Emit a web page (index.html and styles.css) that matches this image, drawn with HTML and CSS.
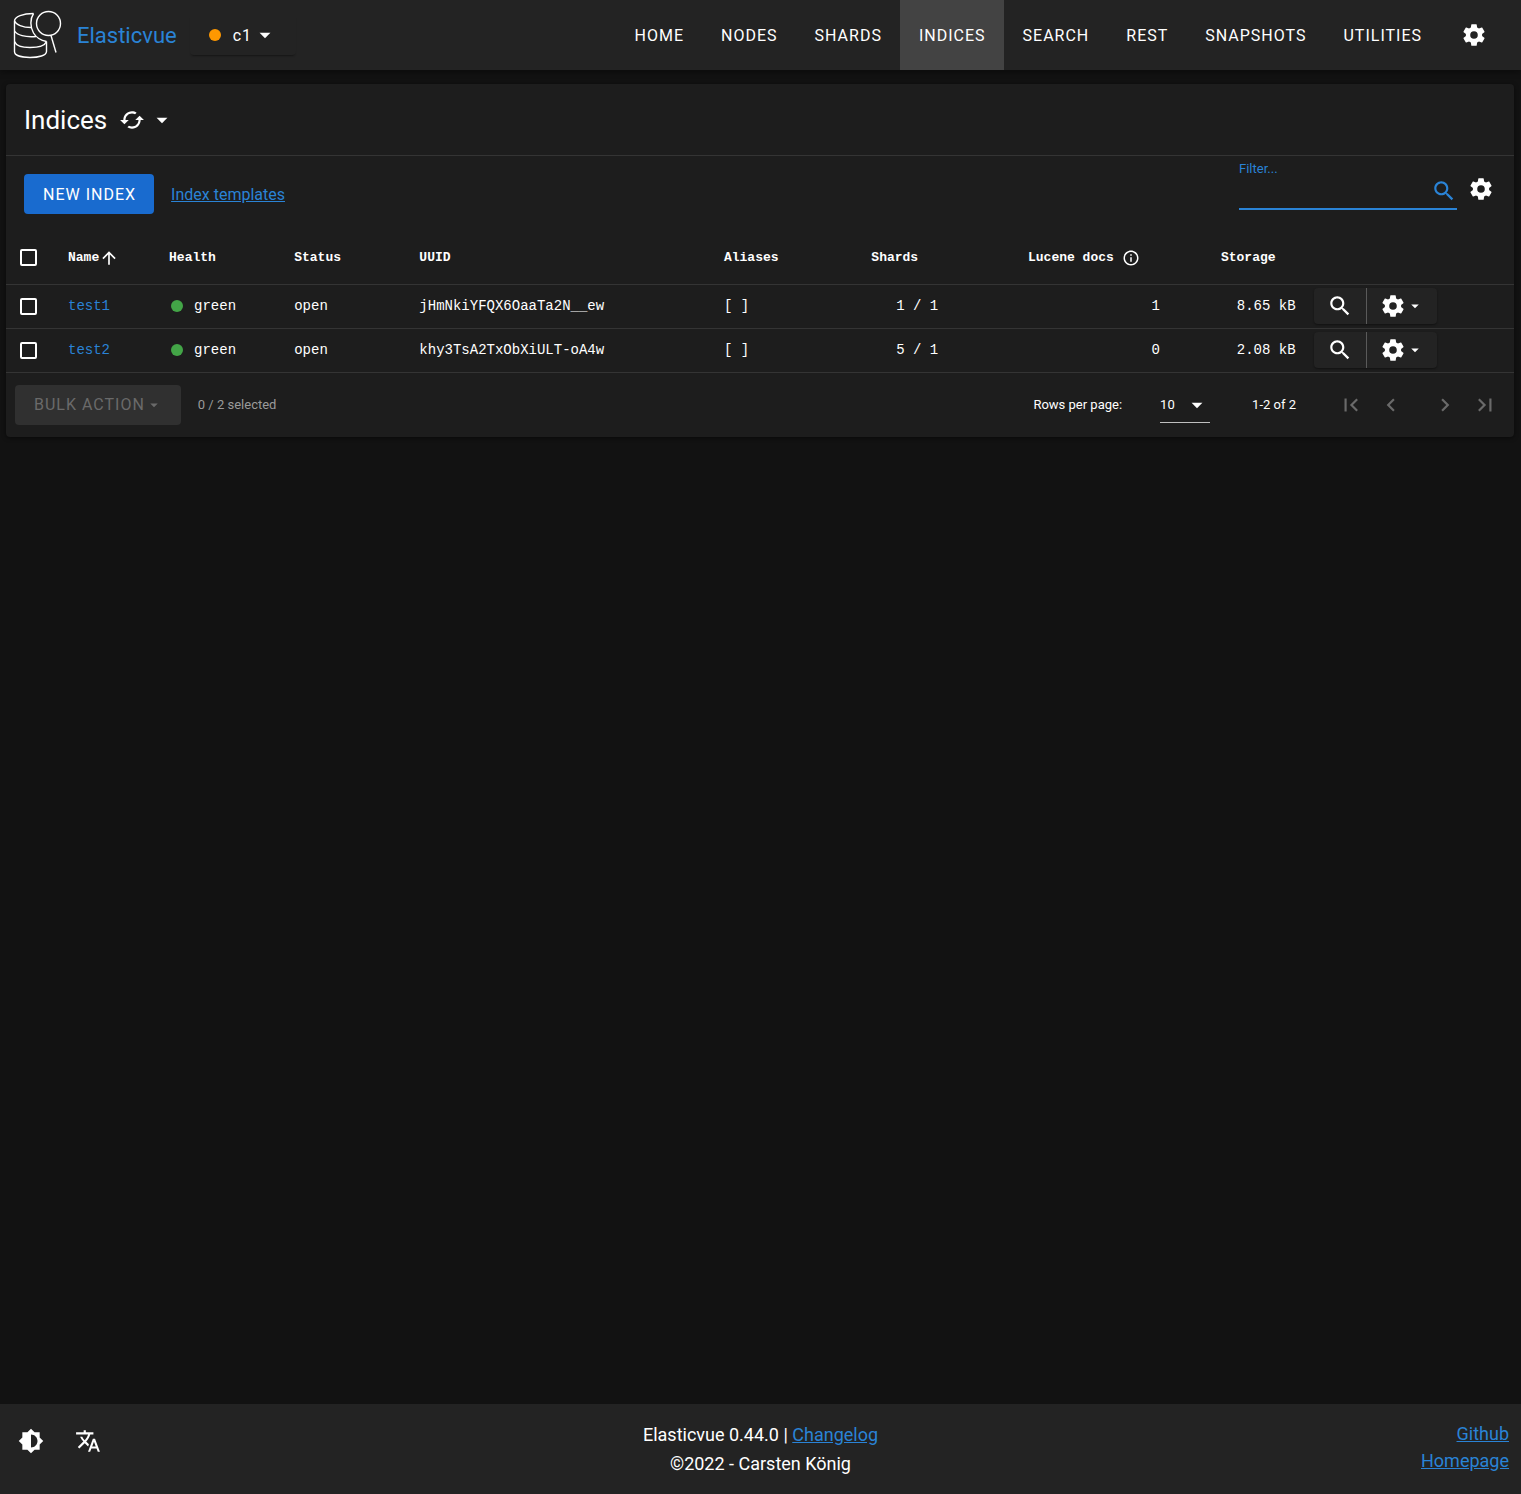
FILE: index.html
```html
<!DOCTYPE html>
<html lang="en">
<head>
  <meta charset="UTF-8" />
  <meta name="viewport" content="width=device-width, initial-scale=1.0" />
  <title>Elasticvue</title>
  <link rel="stylesheet" href="styles.css">
</head>
<body>
  <!-- Icon sprite -->
  <svg class="sprite" xmlns="http://www.w3.org/2000/svg">
    <symbol id="cog" viewBox="0 0 24 24"><path d="M12,15.5A3.5,3.5 0 0,1 8.5,12A3.5,3.5 0 0,1 12,8.5A3.5,3.5 0 0,1 15.5,12A3.5,3.5 0 0,1 12,15.5M19.43,12.97C19.47,12.65 19.5,12.33 19.5,12C19.5,11.67 19.47,11.34 19.43,11L21.54,9.37C21.73,9.22 21.78,8.95 21.66,8.73L19.66,5.27C19.54,5.05 19.27,4.96 19.05,5.05L16.56,6.05C16.04,5.66 15.5,5.32 14.87,5.07L14.5,2.42C14.46,2.18 14.25,2 14,2H10C9.75,2 9.54,2.18 9.5,2.42L9.13,5.07C8.5,5.32 7.96,5.66 7.44,6.05L4.95,5.05C4.73,4.96 4.46,5.05 4.34,5.27L2.34,8.73C2.21,8.95 2.27,9.22 2.46,9.37L4.57,11C4.53,11.34 4.5,11.67 4.5,12C4.5,12.33 4.53,12.65 4.57,12.97L2.46,14.63C2.27,14.78 2.21,15.05 2.34,15.27L4.34,18.73C4.46,18.95 4.73,19.03 4.95,18.95L7.44,17.94C7.96,18.34 8.5,18.68 9.13,18.93L9.5,21.58C9.54,21.82 9.75,22 10,22H14C14.25,22 14.46,21.82 14.5,21.58L14.87,18.93C15.5,18.67 16.04,18.34 16.56,17.94L19.05,18.95C19.27,19.03 19.54,18.95 19.66,18.73L21.66,15.27C21.78,15.05 21.73,14.78 21.54,14.63L19.43,12.97Z" /></symbol>
    <symbol id="search" viewBox="0 0 24 24"><path d="M15.5 14h-.79l-.28-.27C15.41 12.59 16 11.11 16 9.5 16 5.91 13.09 3 9.5 3S3 5.91 3 9.5 5.91 16 9.5 16c1.61 0 3.09-.59 4.23-1.57l.27.28v.79l5 4.99L20.49 19l-4.99-5zm-6 0C7.01 14 5 11.99 5 9.5S7.01 5 9.5 5 14 7.01 14 9.5 11.99 14 9.5 14z" /></symbol>
    <symbol id="caret" viewBox="0 0 24 24"><path d="M7 10l5 5 5-5z" /></symbol>
    <symbol id="reload" viewBox="0 0 24 24"><path d="M19 8l-4 4h3c0 3.31-2.69 6-6 6-1.01 0-1.97-.25-2.8-.7l-1.46 1.46C8.97 19.54 10.43 20 12 20c4.42 0 8-3.58 8-8h3l-4-4zM6 12c0-3.31 2.69-6 6-6 1.01 0 1.97.25 2.8.7l1.46-1.46C15.03 4.46 13.57 4 12 4c-4.42 0-8 3.58-8 8H1l4 4 4-4H6z" /></symbol>
    <symbol id="arrow-up" viewBox="0 0 24 24"><path d="M4 12l1.41 1.41L11 7.83V20h2V7.83l5.58 5.59L20 12l-8-8-8 8z" /></symbol>
    <symbol id="info" viewBox="0 0 24 24"><path d="M11 7h2v2h-2zm0 4h2v6h-2zm1-9C6.48 2 2 6.48 2 12s4.48 10 10 10 10-4.48 10-10S17.52 2 12 2zm0 18c-4.41 0-8-3.59-8-8s3.59-8 8-8 8 3.59 8 8-3.59 8-8 8z" /></symbol>
    <symbol id="first" viewBox="0 0 24 24"><path d="M18.41 16.59L13.82 12l4.59-4.59L17 6l-6 6 6 6zM6 6h2v12H6z" /></symbol>
    <symbol id="prev" viewBox="0 0 24 24"><path d="M15.41 7.41L14 6l-6 6 6 6 1.41-1.41L10.83 12z" /></symbol>
    <symbol id="next" viewBox="0 0 24 24"><path d="M10 6L8.59 7.41 13.17 12l-4.58 4.59L10 18l6-6z" /></symbol>
    <symbol id="last" viewBox="0 0 24 24"><path d="M5.59 7.41L10.18 12l-4.59 4.59L7 18l6-6-6-6zM16 6h2v12h-2z" /></symbol>
    <symbol id="theme" viewBox="0 0 24 24"><path d="M20 15.31L23.31 12 20 8.69V4h-4.69L12 .69 8.69 4H4v4.69L.69 12 4 15.31V20h4.69L12 23.31 15.31 20H20v-4.69zM12 18V6c3.31 0 6 2.69 6 6s-2.69 6-6 6z" /></symbol>
    <symbol id="translate" viewBox="0 0 24 24"><path d="M12.87 15.07l-2.54-2.51.03-.03c1.74-1.94 2.98-4.17 3.71-6.53H17V4h-7V2H8v2H1v1.99h11.17C11.5 7.92 10.44 9.75 9 11.35 8.07 10.32 7.3 9.19 6.69 8h-2c.73 1.63 1.73 3.17 2.98 4.56l-5.09 5.02L4 19l5-5 3.11 3.11.76-2.04zM18.5 10h-2L12 22h2l1.12-3h4.75L21 22h2l-4.5-12zm-2.62 7l1.62-4.33L19.12 17h-3.24z" /></symbol>
  </svg>

  <header class="topbar">
    <a class="brand" href="#">
      <svg class="logo" viewBox="0 0 50 50">
        <path d="M21.500 3.500C11 3.500 2.500 6.500 2.500 11V41.500C2.500 45.500 9.500 47.500 18 47.500S34.500 45.500 34.500 41.500V31.500" />
        <path d="M21.500 3.500C18 9 18 17 21.500 23C24.500 28 29 30.500 34.500 31.500" />
        <path d="M2.500 11C4 14.500 10.500 17.500 19 17.500" />
        <path d="M2.500 21C5 25 13 27.500 24 26.500" />
        <path d="M2.500 31.500C4 35.500 9.500 37.500 18 37.500S33 35.500 34.500 31.500" />
        <circle cx="36.500" cy="13.500" r="12" />
        <path d="M39 25.500L44 42.500" />
      </svg>
      <span>Elasticvue</span>
    </a>
    <button class="btn cluster" type="button">
      <span class="dot orange"></span>
      c1
      <svg class="icon"><use href="#caret" /></svg>
    </button>
    <nav class="tabs">
      <a href="#">HOME</a>
      <a href="#">NODES</a>
      <a href="#">SHARDS</a>
      <a href="#" class="active">INDICES</a>
      <a href="#">SEARCH</a>
      <a href="#">REST</a>
      <a href="#">SNAPSHOTS</a>
      <a href="#">UTILITIES</a>
    </nav>
    <button class="icon-btn" type="button" aria-label="Settings"><svg class="icon"><use href="#cog" /></svg></button>
  </header>

  <main class="card">
    <div class="card-title">
      <h1>Indices</h1>
      <button class="icon-btn reload" type="button" aria-label="Reload">
        <svg class="icon"><use href="#reload" /></svg>
        <svg class="icon"><use href="#caret" /></svg>
      </button>
    </div>

    <div class="toolbar">
      <button class="btn primary" type="button">NEW INDEX</button>
      <a class="link" href="#">Index templates</a>
      <div class="filter">
        <label for="filter">Filter...</label>
        <div class="filter-row">
          <input id="filter" type="text" />
          <svg class="icon"><use href="#search" /></svg>
        </div>
      </div>
      <button class="icon-btn" type="button" aria-label="Table settings"><svg class="icon"><use href="#cog" /></svg></button>
    </div>

    <table class="indices">
      <thead>
        <tr>
          <th class="col-check"><input type="checkbox" aria-label="Select all" /></th>
          <th class="col-name"><span class="head">Name<svg class="icon sort"><use href="#arrow-up" /></svg></span></th>
          <th class="col-health">Health</th>
          <th class="col-status">Status</th>
          <th class="col-uuid">UUID</th>
          <th class="col-aliases">Aliases</th>
          <th class="col-shards num">Shards</th>
          <th class="col-docs num"><span class="head">Lucene docs<svg class="icon info"><use href="#info" /></svg></span></th>
          <th class="col-storage num">Storage</th>
          <th></th>
        </tr>
      </thead>
      <tbody>
        <tr>
          <td><input type="checkbox" aria-label="Select test1" /></td>
          <td><a href="#">test1</a></td>
          <td><span class="health"><span class="dot green"></span>green</span></td>
          <td>open</td>
          <td>jHmNkiYFQX6OaaTa2N__ew</td>
          <td>[ ]</td>
          <td class="num">1 / 1</td>
          <td class="num">1</td>
          <td class="num">8.65 kB</td>
          <td>
            <div class="actions">
              <button type="button" aria-label="Search test1"><svg class="icon"><use href="#search" /></svg></button>
              <button type="button" aria-label="Options for test1"><svg class="icon"><use href="#cog" /></svg><svg class="icon small"><use href="#caret" /></svg></button>
            </div>
          </td>
        </tr>
        <tr>
          <td><input type="checkbox" aria-label="Select test2" /></td>
          <td><a href="#">test2</a></td>
          <td><span class="health"><span class="dot green"></span>green</span></td>
          <td>open</td>
          <td>khy3TsA2TxObXiULT-oA4w</td>
          <td>[ ]</td>
          <td class="num">5 / 1</td>
          <td class="num">0</td>
          <td class="num">2.08 kB</td>
          <td>
            <div class="actions">
              <button type="button" aria-label="Search test2"><svg class="icon"><use href="#search" /></svg></button>
              <button type="button" aria-label="Options for test2"><svg class="icon"><use href="#cog" /></svg><svg class="icon small"><use href="#caret" /></svg></button>
            </div>
          </td>
        </tr>
      </tbody>
    </table>

    <div class="table-footer">
      <button class="btn bulk" type="button" disabled>BULK ACTION<svg class="icon small"><use href="#caret" /></svg></button>
      <span class="selected">0 / 2 selected</span>
      <label class="rows-label" for="rows">Rows per page:</label>
      <div class="rows-select">
        <select id="rows">
          <option>10</option>
          <option>20</option>
          <option>100</option>
        </select>
        <svg class="icon"><use href="#caret" /></svg>
      </div>
      <span class="range">1-2 of 2</span>
      <div class="pager">
        <button type="button" disabled aria-label="First page"><svg class="icon"><use href="#first" /></svg></button>
        <button type="button" disabled aria-label="Previous page"><svg class="icon"><use href="#prev" /></svg></button>
      </div>
      <div class="pager">
        <button type="button" disabled aria-label="Next page"><svg class="icon"><use href="#next" /></svg></button>
        <button type="button" disabled aria-label="Last page"><svg class="icon"><use href="#last" /></svg></button>
      </div>
    </div>
  </main>

  <footer class="footer">
    <div class="footer-tools">
      <button class="icon-btn" type="button" aria-label="Toggle theme"><svg class="icon"><use href="#theme" /></svg></button>
      <button class="icon-btn" type="button" aria-label="Language"><svg class="icon"><use href="#translate" /></svg></button>
    </div>
    <div class="footer-info">
      <p>Elasticvue 0.44.0 | <a href="#">Changelog</a></p>
      <p>©2022 - Carsten König</p>
    </div>
    <div class="footer-links">
      <a href="#">Github</a>
      <a href="#">Homepage</a>
    </div>
  </footer>
</body>
</html>
```
FILE: styles.css
```css
/* Reset & Base */
* {
  margin: 0;
  padding: 0;
  box-sizing: border-box;
}

body {
  display: flex;
  flex-direction: column;
  min-height: 100vh;
  background: #121212;
  color: #fff;
  font-family: Roboto, sans-serif;
  font-size: 16px;
}

button, input, select {
  font: inherit;
  color: inherit;
  background: none;
  border: none;
}

button {
  cursor: pointer;
}

a {
  color: #2a83d6;
}

.sprite {
  display: none;
}

.icon {
  display: block;
  flex: none;
  width: 26px;
  height: 26px;
  fill: currentColor;
}

.icon.small {
  width: 18px;
  height: 18px;
}

.dot {
  width: 12px;
  height: 12px;
  border-radius: 50%;
}

.orange {
  background: #ff9800;
}

.green {
  background: #43a547;
}

/* Buttons */
.btn {
  display: flex;
  align-items: center;
  height: 40px;
  padding: 0 18px 0 19px;
  border-radius: 4px;
  font-size: 16px;
  letter-spacing: 1px;
}

.icon-btn {
  display: flex;
  align-items: center;
}

.primary {
  background: #196bcf;
}

/* Top bar */
.topbar {
  display: flex;
  align-items: center;
  height: 70px;
  padding: 0 34px 0 12px;
  background: #232323;
  box-shadow: 0 2px 6px rgba(0, 0, 0, 0.4);
}

.brand {
  display: flex;
  align-items: center;
  gap: 15px;
  font-size: 22px;
  text-decoration: none;
}

.logo {
  width: 50px;
  height: 50px;
  fill: none;
  stroke: #fff;
  stroke-width: 1.4;
}

.cluster {
  gap: 12px;
  margin-left: 13px;
  box-shadow: 0 2px 2px -1px rgba(0, 0, 0, 0.4);
}

.cluster .icon {
  margin-left: -12px;
}

.tabs {
  display: flex;
  align-self: stretch;
  margin-left: auto;
}

.tabs a {
  display: flex;
  align-items: center;
  padding: 0 18px 0 19px;
  color: #fff;
  font-size: 16px;
  letter-spacing: 1px;
  text-decoration: none;
}

.tabs .active {
  background: #434343;
}

.topbar .icon-btn {
  margin-left: 21px;
}

/* Card */
.card {
  margin: 14px 7px 14px 6px;
  background: #1d1d1d;
  border-radius: 4px;
  box-shadow: 0 1px 4px rgba(0, 0, 0, 0.5);
}

.card-title {
  display: flex;
  align-items: center;
  gap: 12px;
  height: 72px;
  padding: 0 18px;
  border-bottom: 1px solid #343434;
}

h1 {
  font-size: 26px;
  font-weight: 400;
}

.reload {
  gap: 4px;
}

/* Toolbar */
.toolbar {
  display: flex;
  align-items: center;
  height: 76px;
  padding: 0 20px 0 18px;
}

.link {
  margin-left: 17px;
}

.filter {
  align-self: flex-start;
  width: 218px;
  margin-left: auto;
  margin-right: 11px;
  padding-top: 4px;
  border-bottom: 2px solid #2a83d6;
  color: #2a83d6;
}

.filter label {
  display: block;
  font-size: 13px;
  line-height: 18px;
}

.filter-row {
  display: flex;
  height: 30px;
}

.filter input {
  flex: 1;
  min-width: 0;
  outline: none;
}

.toolbar .icon-btn {
  margin-bottom: 10px;
}

/* Table */
.indices {
  width: 100%;
  table-layout: fixed;
  border-collapse: collapse;
  font-family: "Liberation Mono", monospace;
  font-size: 14px;
}

.indices th,
.indices td {
  height: 44px;
  padding: 0 9px;
  border-bottom: 1px solid #343434;
  text-align: left;
  vertical-align: middle;
}

.indices th {
  height: 52px;
  font-size: 13px;
}

.indices .num {
  text-align: right;
}

.indices th.num {
  padding-right: 29px;
}

.indices td a {
  text-decoration: none;
}

.indices th:first-child,
.indices td:first-child {
  padding-left: 14px;
}

.col-check { width: 53px; }
.col-name { width: 6.7%; }
.col-health { width: 8.3%; }
.col-status { width: 8.3%; }
.col-uuid { width: 20.2%; }
.col-aliases { width: 8.1%; }
.col-shards { width: 7.3%; }
.col-docs { width: 14.7%; }
.col-storage { width: 9%; }

.indices input {
  display: block;
  appearance: none;
  width: 17px;
  height: 17px;
  border: 2px solid #fff;
  border-radius: 2px;
}

.head {
  display: inline-flex;
  align-items: center;
}

.icon.sort {
  width: 20px;
  height: 20px;
}

.icon.info {
  width: 18px;
  height: 18px;
  margin-left: 8px;
}

.health {
  display: flex;
  align-items: center;
  gap: 11px;
  padding-left: 2px;
}

.actions {
  display: inline-flex;
  height: 36px;
  background: #232323;
  border-radius: 4px;
  box-shadow: 0 1px 2px rgba(0, 0, 0, 0.4);
  vertical-align: middle;
}

.actions button {
  display: flex;
  align-items: center;
  padding: 0 13px;
}

.actions button + button {
  border-left: 1px solid #5a5a5a;
}

/* Table footer */
.table-footer {
  display: flex;
  align-items: center;
  height: 64px;
  padding: 0 16px 0 9px;
  font-size: 13px;
}

.bulk {
  background: #303030;
  color: #6a6a6a;
  cursor: default;
}

.selected {
  margin-left: 17px;
  color: #9a9a9a;
}

.rows-label {
  margin-left: auto;
}

.rows-select {
  position: relative;
  width: 50px;
  margin: 0 42px 0 38px;
  border-bottom: 1px solid #c0c0c0;
}

.rows-select select {
  appearance: none;
  width: 100%;
  height: 36px;
}

.rows-select .icon {
  position: absolute;
  top: 6px;
  right: 0;
  pointer-events: none;
}

.pager {
  display: flex;
  gap: 14px;
  margin-left: 28px;
  color: #6a6a6a;
}

.range + .pager {
  margin-left: 42px;
}

/* Footer */
.footer {
  display: grid;
  grid-template-columns: 1fr auto 1fr;
  align-items: center;
  height: 90px;
  margin-top: auto;
  padding: 0 12px;
  background: #232323;
  font-size: 18px;
}

.footer-tools {
  display: flex;
  gap: 31px;
  margin-bottom: 16px;
  padding-left: 6px;
}

.footer-info {
  line-height: 29px;
  text-align: center;
}

.footer-links {
  display: flex;
  flex-direction: column;
  align-items: flex-end;
  padding-bottom: 5px;
  line-height: 27px;
}
```
